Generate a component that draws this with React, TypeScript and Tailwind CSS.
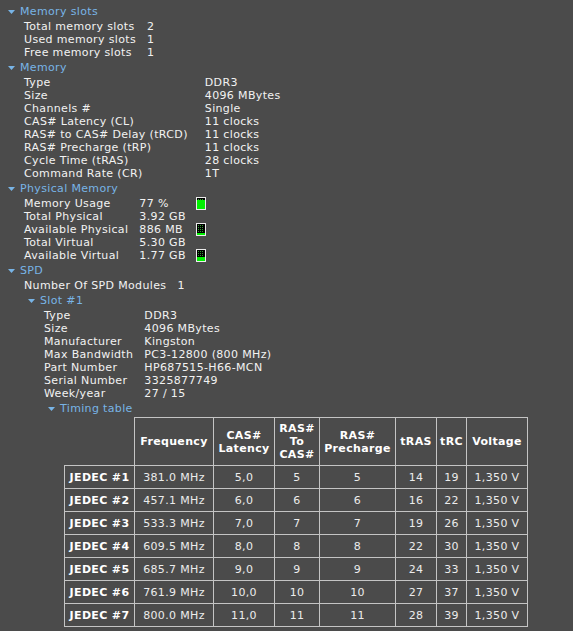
import React from "react";

const Arrow = () => (
  <svg width="7" height="4" viewBox="0 0 7 4" className="shrink-0">
    <path d="M0 0H7L3.5 4Z" fill="#78b4e6" />
  </svg>
);

function Heading({ label, pad }: { label: string; pad: string }) {
  return (
    <div className={`flex items-center h-[17px] gap-[5px] text-[#78b4e6] ${pad}`}>
      <Arrow />
      <span>{label}</span>
    </div>
  );
}

function Rows({ rows, pad, gap = "gap-x-[11px]" }: { rows: [string, string][]; pad: string; gap?: string }) {
  return (
    <div className={`grid grid-cols-[max-content_max-content] auto-rows-[13px] ${gap} ${pad}`}>
      {rows.map(([a, b], i) => (
        <React.Fragment key={i}>
          <div>{a}</div>
          <div>{b}</div>
        </React.Fragment>
      ))}
    </div>
  );
}

function Bar({ g }: { g: number }) {
  const dots: { x: number; y: number }[] = [];
  for (let y = 2; y <= 11; y += 2) for (let x = 2; x <= 7; x += 2) dots.push({ x, y });
  return (
    <svg width="10" height="13" viewBox="0 0 10 13">
      <rect x="0.5" y="0.5" width="9" height="12" fill="#000" stroke="#ececec" />
      {dots.map((d, i) => (
        <rect key={i} x={d.x} y={d.y} width="1" height="1" fill="#2f9a2f" />
      ))}
      <rect x="1" y={12 - g} width="8" height={g} fill="#00f000" />
    </svg>
  );
}

const timing = [
  ["JEDEC #1", "381.0 MHz", "5,0", "5", "5", "14", "19", "1,350 V"],
  ["JEDEC #2", "457.1 MHz", "6,0", "6", "6", "16", "22", "1,350 V"],
  ["JEDEC #3", "533.3 MHz", "7,0", "7", "7", "19", "26", "1,350 V"],
  ["JEDEC #4", "609.5 MHz", "8,0", "8", "8", "22", "30", "1,350 V"],
  ["JEDEC #5", "685.7 MHz", "9,0", "9", "9", "24", "33", "1,350 V"],
  ["JEDEC #6", "761.9 MHz", "10,0", "10", "10", "27", "37", "1,350 V"],
  ["JEDEC #7", "800.0 MHz", "11,0", "11", "11", "28", "39", "1,350 V"],
];

export default function App() {
  const physical: [string, string, number | null][] = [
    ["Memory Usage", "77 %", 9],
    ["Total Physical", "3.92 GB", null],
    ["Available Physical", "886 MB", 2],
    ["Total Virtual", "5.30 GB", null],
    ["Available Virtual", "1.77 GB", 4],
  ];
  const th = "border border-[#c4c4c4] font-bold text-white leading-[13px] px-0";
  const td = "border border-[#c4c4c4] text-center px-0";
  return (
    <div className="w-[573px] h-[631px] overflow-hidden bg-[#4b4b4b] text-[#f2f2f2] text-[11px] leading-[13px] tracking-[0.35px] font-['DejaVu_Sans',sans-serif] pt-[3px]">
      <Heading label="Memory slots" pad="pl-[8px]" />
      <Rows
        pad="pl-[24px]"
        rows={[
          ["Total memory slots", "2"],
          ["Used memory slots", "1"],
          ["Free memory slots", "1"],
        ]}
      />
      <Heading label="Memory" pad="pl-[8px]" />
      <Rows
        pad="pl-[24px]"
        gap="gap-x-[17px]"
        rows={[
          ["Type", "DDR3"],
          ["Size", "4096 MBytes"],
          ["Channels #", "Single"],
          ["CAS# Latency (CL)", "11 clocks"],
          ["RAS# to CAS# Delay (tRCD)", "11 clocks"],
          ["RAS# Precharge (tRP)", "11 clocks"],
          ["Cycle Time (tRAS)", "28 clocks"],
          ["Command Rate (CR)", "1T"],
        ]}
      />
      <Heading label="Physical Memory" pad="pl-[8px]" />
      <div className="grid grid-cols-[max-content_max-content_max-content] gap-x-[11px] auto-rows-[13px] pl-[24px]">
        {physical.map(([a, b, g], i) => (
          <React.Fragment key={i}>
            <div>{a}</div>
            <div>{b}</div>
            <div className="-ml-[1px] flex items-center">{g !== null ? <Bar g={g} /> : null}</div>
          </React.Fragment>
        ))}
      </div>
      <Heading label="SPD" pad="pl-[8px]" />
      <Rows pad="pl-[24px]" rows={[["Number Of SPD Modules", "1"]]} />
      <Heading label="Slot #1" pad="pl-[28px]" />
      <Rows
        pad="pl-[44px]"
        rows={[
          ["Type", "DDR3"],
          ["Size", "4096 MBytes"],
          ["Manufacturer", "Kingston"],
          ["Max Bandwidth", "PC3-12800 (800 MHz)"],
          ["Part Number", "HP687515-H66-MCN"],
          ["Serial Number", "3325877749"],
          ["Week/year", "27 / 15"],
        ]}
      />
      <Heading label="Timing table" pad="pl-[48px]" />
      <div className="pl-[64px]">
        <table className="table-fixed border-collapse w-[463px] text-[#ececec]">
          <colgroup>
            <col className="w-[70px]" />
            <col className="w-[79px]" />
            <col className="w-[61px]" />
            <col className="w-[45px]" />
            <col className="w-[76px]" />
            <col className="w-[41px]" />
            <col className="w-[30px]" />
            <col className="w-[61px]" />
          </colgroup>
          <thead>
            <tr className="h-[48px]">
              <th className="p-0"></th>
              <th className={th}>Frequency</th>
              <th className={th}>
                CAS#
                <br />
                Latency
              </th>
              <th className={th}>
                RAS#
                <br />
                To
                <br />
                CAS#
              </th>
              <th className={th}>
                RAS#
                <br />
                Precharge
              </th>
              <th className={th}>tRAS</th>
              <th className={th}>tRC</th>
              <th className={th}>Voltage</th>
            </tr>
          </thead>
          <tbody>
            {timing.map((r, i) => (
              <tr key={i} className="h-[23px]">
                {r.map((c, j) => (
                  <td key={j} className={j === 0 ? `${td} font-bold text-white` : td}>
                    {c}
                  </td>
                ))}
              </tr>
            ))}
          </tbody>
        </table>
      </div>
    </div>
  );
}
